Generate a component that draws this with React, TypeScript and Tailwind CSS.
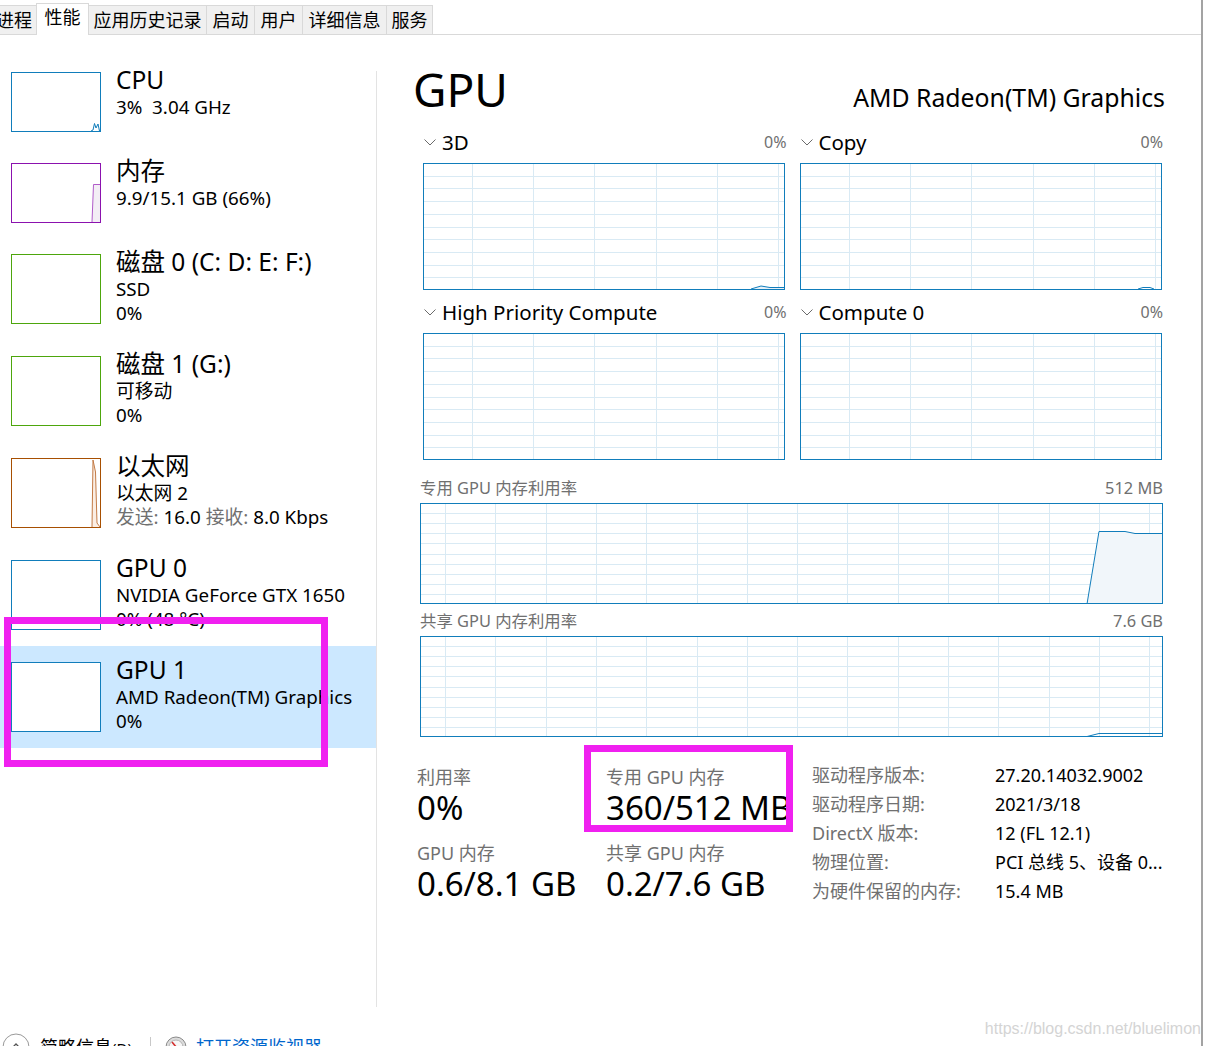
import React from "react";

const FONT = "font-['Noto_Sans','Noto_Sans_CJK_SC',sans-serif]";

type Tab = { label: string; cls: string; active?: boolean };

const tabs: Tab[] = [
  { label: "进程", cls: "w-[45px] -ml-[8px]" },
  { label: "性能", cls: "w-[53px] -ml-px", active: true },
  { label: "应用历史记录", cls: "w-[118px]" },
  { label: "启动", cls: "w-[48px]" },
  { label: "用户", cls: "w-[48px]" },
  { label: "详细信息", cls: "w-[84px]" },
  { label: "服务", cls: "w-[46px]" },
];

type SideItem = {
  title: string;
  lines: React.ReactNode[];
  border: string;
  tall: boolean;
  selected?: boolean;
  mark?: React.ReactNode;
};

const grey = "text-[#707070]";

const sideItems: SideItem[] = [
  {
    title: "CPU",
    lines: [<span className="whitespace-pre">3%  3.04 GHz</span>],
    border: "border-[#117dbb]",
    tall: false,
    mark: <path d="M79 58 L81 57 L82.5 50.5 L84 55 L86 51 L87.5 58 L88 58" fill="none" stroke="#117dbb" strokeWidth="1" />,
  },
  {
    title: "内存",
    lines: ["9.9/15.1 GB (66%)"],
    border: "border-[#8b12ae]",
    tall: false,
    mark: (
      <>
        <path d="M80 58 L81.5 20.5 L88 20.5 L88 58 Z" fill="#f3eef5" />
        <path d="M80 58 L81.5 20.5 L88 20.5" fill="none" stroke="#b05cc9" strokeWidth="1" />
      </>
    ),
  },
  { title: "磁盘 0 (C: D: E: F:)", lines: ["SSD", "0%"], border: "border-[#4da60c]", tall: true },
  { title: "磁盘 1 (G:)", lines: ["可移动", "0%"], border: "border-[#4da60c]", tall: true },
  {
    title: "以太网",
    lines: [
      "以太网 2",
      <span>
        <span className={grey}>发送:</span> 16.0 <span className={grey}>接收:</span> 8.0 Kbps
      </span>,
    ],
    border: "border-[#a74f01]",
    tall: true,
    mark: (
      <>
        <path d="M80 68 L81 1 L83.5 13 L85 64 L88 68 Z" fill="#fbeee4" />
        <path d="M80 68 L81 1 L83.5 13 L85 64 L88 68" fill="none" stroke="#c27a45" strokeWidth="1" />
      </>
    ),
  },
  { title: "GPU 0", lines: ["NVIDIA GeForce GTX 1650", "0% (48 °C)"], border: "border-[#117dbb]", tall: true },
  {
    title: "GPU 1",
    lines: ["AMD Radeon(TM) Graphics", "0%"],
    border: "border-[#117dbb]",
    tall: true,
    selected: true,
  },
];

function Thumb({ item }: { item: SideItem }) {
  const h = item.tall ? 68 : 58;
  return (
    <div className={`w-[90px] shrink-0 border bg-white ${item.border} ${item.tall ? "h-[70px]" : "h-[60px]"}`}>
      <svg width="88" height={h} className="block">
        {item.mark}
      </svg>
    </div>
  );
}

function Graph({
  w,
  h,
  offset,
  step,
  children,
}: {
  w: number;
  h: number;
  offset: number;
  step: number;
  children?: React.ReactNode;
}) {
  const xs: number[] = [];
  for (let x = offset; x < w - 1; x += step) xs.push(Math.round(x) + 0.5);
  const ys: number[] = [];
  for (let i = 1; i < 10; i++) ys.push(Math.round((h * i) / 10) + 0.5);
  return (
    <svg width={w} height={h} className="block" shapeRendering="crispEdges">
      {xs.map((x) => (
        <line key={"x" + x} x1={x} y1={0} x2={x} y2={h} stroke="#d9eaf4" />
      ))}
      {ys.map((y) => (
        <line key={"y" + y} x1={0} y1={y} x2={w} y2={y} stroke="#d9eaf4" />
      ))}
      <g shapeRendering="auto">{children}</g>
      <rect x={0.5} y={0.5} width={w - 1} height={h - 1} fill="none" stroke="#117dbb" />
    </svg>
  );
}

function Chevron() {
  return (
    <svg width="12" height="7" className="shrink-0">
      <path d="M0.5 0.5 L6 6 L11.5 0.5" fill="none" stroke="#6a6a6a" strokeWidth="1" />
    </svg>
  );
}

function Engine({ name, path }: { name: string; path?: React.ReactNode }) {
  return (
    <div>
      <div className="flex h-[28px] items-center pl-[4px]">
        <Chevron />
        <span className="ml-[6px] text-[20.5px] leading-[28px] text-black">{name}</span>
        <span className={`ml-auto text-[16px] ${grey}`}>0%</span>
      </div>
      <div className="ml-[3px] mt-[7px]">
        <Graph w={362} h={127} offset={49} step={61.2}>
          {path}
        </Graph>
      </div>
    </div>
  );
}

function Stat({ label, value }: { label: string; value: string }) {
  return (
    <div>
      <div className={`text-[18px] leading-[22px] ${grey}`}>{label}</div>
      <div className="whitespace-nowrap text-[33px] leading-[40px] text-black">{value}</div>
    </div>
  );
}

const info: [string, string][] = [
  ["驱动程序版本:", "27.20.14032.9002"],
  ["驱动程序日期:", "2021/3/18"],
  ["DirectX 版本:", "12 (FL 12.1)"],
  ["物理位置:", "PCI 总线 5、设备 0..."],
  ["为硬件保留的内存:", "15.4 MB"],
];

export default function App() {
  return (
    <div className={`relative h-[1046px] w-[1209px] overflow-hidden bg-white ${FONT}`}>
      <div className="h-[1046px] w-[1203px] border-r-2 border-[#a3a3a3]">
        {/* tab bar */}
        <div className="flex h-[35px] items-end border-b border-[#d9d9d9]">
          {tabs.map((t) =>
            t.active ? (
              <div
                key={t.label}
                className={`relative z-10 -mb-px flex h-[32px] items-center justify-center border-x border-t border-[#d9d9d9] bg-white pb-[4px] text-[18px] text-black ${t.cls}`}
              >
                {t.label}
              </div>
            ) : (
              <div
                key={t.label}
                className={`flex h-[29px] items-center justify-center border-r border-t border-[#d9d9d9] bg-[#f0f0f0] text-[18px] text-black ${t.cls}`}
              >
                {t.label}
              </div>
            )
          )}
        </div>

        {/* body */}
        <div className="flex h-[972px]">
          <div className="w-[376px] shrink-0 pt-[21px]">
            {sideItems.map((it) => (
              <div
                key={it.title}
                className={`flex items-start pl-[11px] pt-[16px] ${it.tall ? "h-[102px]" : "h-[91px]"} ${it.selected ? "bg-[#cce8ff]" : ""}`}
              >
                <Thumb item={it} />
                <div className="-mt-[7px] ml-[15px] whitespace-nowrap text-black">
                  <div className="text-[24.5px] leading-[30px]">{it.title}</div>
                  {it.lines.map((l, i) => (
                    <div key={i} className="text-[18.8px] leading-[24px]">
                      {l}
                    </div>
                  ))}
                </div>
              </div>
            ))}
          </div>
          <div className="mt-[36px] w-px shrink-0 bg-[#e3e3e3]" />

          {/* detail panel */}
          <div className="w-[743px] shrink-0 ml-[43px] pt-[26px]">
            <div className="flex items-baseline justify-between">
              <span className="-ml-[7px] text-[46px] leading-[56px] text-black">GPU</span>
              <span className="-mr-[2px] text-[24.8px] text-black">AMD Radeon(TM) Graphics</span>
            </div>

            <div className="mt-[11px] grid grid-cols-2 gap-x-[10px] gap-y-[8px]">
              <Engine
                name="3D"
                path={<path d="M328 126 L338 123 L347 124.5 L362 124.5 L362 127 L328 127 Z" fill="#e6f0f8" stroke="#117dbb" />}
              />
              <Engine
                name="Copy"
                path={<path d="M338 126 L343 124.5 L350 124.5 L354 126" fill="none" stroke="#117dbb" />}
              />
              <Engine name="High Priority Compute" />
              <Engine name="Compute 0" />
            </div>

            <div className="mt-[17px]">
              <div className={`flex h-[22px] items-center text-[16.4px] ${grey}`}>
                <span>专用 GPU 内存利用率</span>
                <span className="ml-auto">512 MB</span>
              </div>
              <div className="mt-[4px]">
                <Graph w={743} h={101} offset={25} step={50.3}>
                  <path d="M667 101 L679 28.5 L705 28.5 L715 30.5 L743 30.5 L743 101 Z" fill="#f1f6fa" />
                  <path d="M667 101 L679 28.5 L705 28.5 L715 30.5 L743 30.5" fill="none" stroke="#117dbb" />
                </Graph>
              </div>
            </div>

            <div className="mt-[6px]">
              <div className={`flex h-[22px] items-center text-[16.4px] ${grey}`}>
                <span>共享 GPU 内存利用率</span>
                <span className="ml-auto">7.6 GB</span>
              </div>
              <div className="mt-[4px]">
                <Graph w={743} h={101} offset={25} step={50.3}>
                  <path d="M667 100.5 L679 97.5 L743 97.5" fill="none" stroke="#117dbb" />
                </Graph>
              </div>
            </div>

            <div className="-ml-[3px] mt-[29px] flex">
              <div className="flex w-[189px] shrink-0 flex-col gap-[14px]">
                <Stat label="利用率" value="0%" />
                <Stat label="GPU 内存" value="0.6/8.1 GB" />
              </div>
              <div className="flex w-[184px] shrink-0 flex-col gap-[14px] overflow-x-clip">
                <Stat label="专用 GPU 内存" value="360/512 MB" />
                <Stat label="共享 GPU 内存" value="0.2/7.6 GB" />
              </div>
              <div className="-mt-[5px] ml-[22px] text-[18px] leading-[29px]">
                {info.map(([k, v]) => (
                  <div key={k} className="flex whitespace-nowrap">
                    <span className={`w-[183px] shrink-0 ${grey}`}>{k}</span>
                    <span className="text-black">{v}</span>
                  </div>
                ))}
              </div>
            </div>
          </div>
        </div>

        {/* footer */}
        <div className="flex h-[28px] items-center mt-[26px] text-[18px]">
          <svg width="28" height="28" className="ml-[2px] shrink-0">
            <circle cx="14" cy="14" r="13" fill="white" stroke="#9a9a9a" />
            <path d="M9 16 L14 11 L19 16" fill="none" stroke="#555" strokeWidth="1.3" />
          </svg>
          <span className="ml-[10px] text-black">
            简略信息<span className="text-[15px]">(D)</span>
          </span>
          <div className="ml-[18px] h-[20px] w-px bg-[#c8c8c8]" />
          <svg width="22" height="22" className="ml-[14px] shrink-0">
            <circle cx="11" cy="11" r="10" fill="#dcdcdc" stroke="#8a8a8a" />
            <circle cx="11" cy="11" r="7" fill="#f6f6f6" stroke="#b5b5b5" />
            <path d="M7 6 L12 12" stroke="#d32f2f" strokeWidth="1.6" />
          </svg>
          <span className="ml-[9px] text-[#0066cc]">打开资源监视器</span>
        </div>
      </div>

      {/* annotations */}
      <div className="pointer-events-none absolute left-[4px] top-[617px] h-[150px] w-[324px] border-[7px] border-[#f020f0]" />
      <div className="pointer-events-none absolute left-[584px] top-[745px] h-[87px] w-[209px] border-[7px] border-[#f020f0]" />
      <div className="pointer-events-none absolute right-[8px] top-[1017px] font-['Liberation_Sans',sans-serif] text-[16px] text-[#d4d4d4]">
        https://blog.csdn.net/bluelimon
      </div>
    </div>
  );
}
